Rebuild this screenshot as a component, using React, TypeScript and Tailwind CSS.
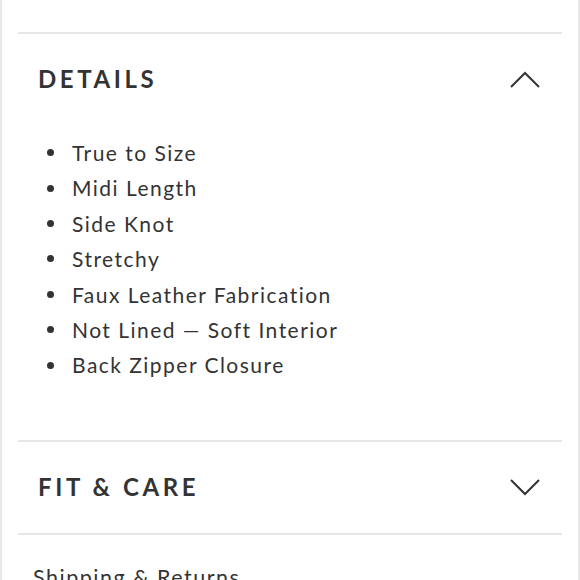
const details = [
  "True to Size",
  "Midi Length",
  "Side Knot",
  "Stretchy",
  "Faux Leather Fabrication",
  "Not Lined — Soft Interior",
  "Back Zipper Closure",
];

const Chevron = ({ up }: { up?: boolean }) => (
  <svg width="30" height="17" viewBox="0 0 30 17" fill="none">
    <polyline
      points={up ? "1,16 15,2 29,16" : "1,1 15,15 29,1"}
      stroke="#333"
      strokeWidth="2"
    />
  </svg>
);

export default function App() {
  return (
    <div
      className="w-[580px] h-[580px] overflow-hidden bg-white text-[#333] border-l-2 border-r-2 border-[#e8e8e8]"
      style={{ fontFamily: "Lato, 'Open Sans', sans-serif" }}
    >
      <div className="px-[16px] pt-[32px]">
        {/* details section */}
        <div className="border-t-2 border-[#e6e6e6]">
          <div className="flex items-center justify-between pt-[29px] pl-[20px] pr-[22px]">
            <h2 className="text-[24px] leading-[32px] font-bold tracking-[0.15em]">DETAILS</h2>
            <Chevron up />
          </div>
          <ul className="pt-[40px] pb-[57px] pl-[29px]">
            {details.map((item) => (
              <li key={item} className="flex items-center h-[35.4px] text-[21px] tracking-[0.07em]">
                <span className="w-[7px] h-[7px] rounded-full bg-[#333] mr-[18px]"></span>
                {item}
              </li>
            ))}
          </ul>
        </div>

        {/* fit & care */}
        <div className="border-t-2 border-[#e6e6e6]">
          <div className="flex items-center justify-between pl-[20px] pr-[22px] h-[91px]">
            <h2 className="text-[24px] leading-[32px] font-bold tracking-[0.15em]">FIT &amp; CARE</h2>
            <Chevron />
          </div>
        </div>

        {/* shipping */}
        <div className="border-t-2 border-[#e6e6e6] pt-[28px] pl-[15px]">
          <p className="text-[21.5px] leading-[28px] tracking-[0.07em]">Shipping &amp; Returns</p>
        </div>
      </div>
    </div>
  );
}
